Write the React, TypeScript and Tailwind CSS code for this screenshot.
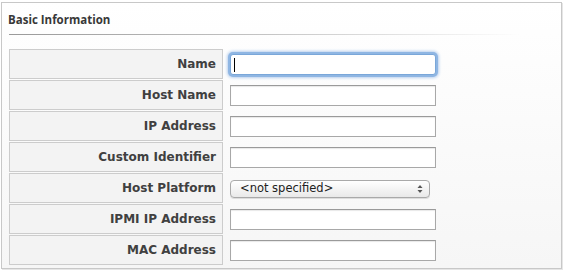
import React from "react";

const rows = [
  "Name",
  "Host Name",
  "IP Address",
  "Custom Identifier",
  "Host Platform",
  "IPMI IP Address",
  "MAC Address",
];

export default function App() {
  return (
    <div className="w-[566px] h-[272px] bg-white pl-[1px] pt-[2px]" style={{ fontFamily: '"DejaVu Sans", sans-serif' }}>
      <div className="w-[561px] h-[267px] border border-[#c8c8c8] bg-gradient-to-b from-white to-[#f6f6f6] shadow-[1px_1px_0_#e6e6e6] px-[7px]">
        <div
          className="h-[31px] pt-[9px] -ml-[1px] text-[11.5px] font-bold text-[#383838] leading-[15px]"
          style={{ fontFamily: '"Open Sans", sans-serif' }}
        >
          Basic Information
        </div>
        <div className="h-[1px] w-[512px] bg-gradient-to-r from-[#9a9a9a] via-[#c4c4c4] to-transparent" />
        <div className="mt-[14px] flex flex-col gap-[1px]">
          {rows.map((r, i) => (
            <div key={r} className="flex items-center h-[30px]">
              <div className="w-[214px] h-[30px] border border-[#cccccc] bg-[#f3f3f3] flex items-center justify-end pr-[6px] text-[12px] font-bold text-[#404040]">
                {r}
              </div>
              <div className="ml-[7px] pt-[1px]">
                {r === "Host Platform" ? (
                  <div className="w-[200px] h-[18px] rounded-[4px] border border-[#a9a9a9] bg-gradient-to-b from-white to-[#e9e9e9] flex items-center pl-[9px] pr-[6px] text-[11.5px] text-[#222] justify-between shadow-[0_1px_0_#ddd]">
                    <span>&lt;not specified&gt;</span>
                    <svg width="6" height="10" viewBox="0 0 6 10">
                      <path d="M3 1 L5.5 4 H0.5 Z" fill="#555" />
                      <path d="M3 9 L5.5 6 H0.5 Z" fill="#555" />
                    </svg>
                  </div>
                ) : (
                  <div
                    className={
                      "w-[206px] h-[21px] bg-white border flex items-center pl-[3px] " +
                      (i === 0
                        ? "border-[#7aa7d9] shadow-[0_0_0_2px_#8fb6e3,0_0_3px_3px_#b8d0ee] rounded-[3px]"
                        : "border-[#a8a8a8] border-t-[#9a9a9a] shadow-[inset_0_1px_1px_#e8e8e8]")
                    }
                  >
                    {i === 0 && <div className="w-[1px] h-[14px] bg-black" />}
                  </div>
                )}
              </div>
            </div>
          ))}
        </div>
      </div>
    </div>
  );
}
